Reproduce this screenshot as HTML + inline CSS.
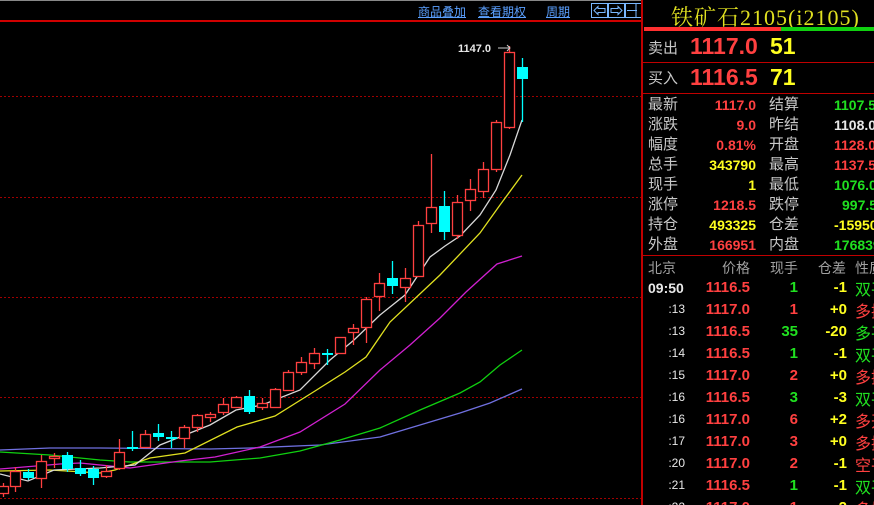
<!DOCTYPE html>
<html><head><meta charset="utf-8"><style>
html,body{margin:0;width:874px;height:505px;background:#000;overflow:hidden;position:relative;font-family:"Liberation Sans","Noto Sans CJK SC",sans-serif}
.a{position:absolute;white-space:nowrap}
.lk{color:#5aa0ff;font-size:12px;text-decoration:underline;top:3px}
.lab{color:#c8c8c8;font-size:15px}
.r{color:#ff4040}.g{color:#20e020}.y{color:#ffff20}.w{color:#e8e8e8}
.num{font-size:14px;text-align:right}
.hl{position:absolute;height:1px;background:#c00000}
</style></head><body>
<div class="a" style="left:0;top:0;width:641px;height:1px;background:#888"></div>
<div class="a lk" style="left:418px">商品叠加</div>
<div class="a lk" style="left:478px">查看期权</div>
<div class="a lk" style="left:546px">周期</div>
<svg class="a" style="left:590px;top:3px" width="52" height="15"><g fill="none" stroke="#7ab8ff"><rect x="1.5" y=".5" width="16" height="14"/><rect x="18.5" y=".5" width="16" height="14"/><rect x="35.5" y=".5" width="16" height="14"/><path d="M4 7.5l4-4v2h7v4H8v2z M32 7.5l-4-4v2h-7v4h7v2z M37 7.5h10 M46 1v13"/></g></svg>
<div class="hl" style="left:0;top:20px;width:642px;background:#d00000;height:2px"></div>
<div class="a" style="left:641px;top:0;width:2px;height:505px;background:#c00000"></div>
<svg class="a" style="left:0;top:0" width="641" height="505">
<g stroke="#a00000" stroke-dasharray="2,2" stroke-width="1"><line x1="0" y1="96.5" x2="641" y2="96.5"/><line x1="0" y1="197.5" x2="641" y2="197.5"/><line x1="0" y1="297.5" x2="641" y2="297.5"/><line x1="0" y1="397.5" x2="641" y2="397.5"/><line x1="0" y1="498.5" x2="641" y2="498.5"/></g>
<g fill="none" stroke-width="1.3">
<polyline stroke="#7070e0" points="0,450 50,448 100,448 210,449 250,448 320,445 380,437 420,425 460,413 490,403 522,389"/>
<polyline stroke="#10d010" points="0,452 50,455 100,460 130,462 210,462 260,458 300,451 340,440 380,428 420,410 460,393 480,382 500,365 522,350"/>
<polyline stroke="#d020d0" points="0,469 60,464 80,463 130,468 180,461 215,457 260,447 300,432 345,404 380,370 410,345 440,318 466,292 497,264 522,256"/>
<polyline stroke="#e0e020" points="0,471 50,470 100,473 115,470 150,458 185,453 237,427 275,416 315,391 345,372 366,357 390,322 440,275 480,233 500,205 522,175"/>
<polyline stroke="#d8d8d8" points="0,474 28,481 54,470 100,468 135,465 160,445 210,425 236,410 262,405 300,390 330,360 354,340 380,315 405,295 430,257 445,246 460,236 480,215 496,190 510,155 522,120"/>
</g>
<g id="c" stroke-width="1.3"></g>
<text x="458" y="52" fill="#e8e8e8" font-size="11" font-weight="bold" font-family="Liberation Sans">1147.0</text>
<path d="M498 48h12m-3-3l3 3-3 3" stroke="#ccc" fill="none"/>
</svg>
<script>
var d=[[3,486,493,483,497,1],[15,471,486,467,492,1],[28,472,477,469,480,0],[41,461,478,455,488,1],[54,456,458,453,468,1],[67,455,468,452,472,0],[80,468,473,460,476,0],[93,469,477,466,485,0],[106,471,476,465,478,1],[119,452,468,439,470,1],[132,447,448,431,451,0],[145,434,447,430,447,1],[158,433,436,424,441,0],[171,437,438,431,448,0],[184,427,438,425,448,1],[197,415,427,414,432,1],[210,414,417,412,422,1],[223,404,412,398,415,1],[236,397,407,396,407,1],[249,396,411,390,414,0],[262,403,407,398,410,1],[275,389,407,388,407,1],[288,372,390,370,390,1],[301,362,372,357,375,1],[314,353,363,348,369,1],[327,353,354,349,365,0],[340,337,353,337,353,1],[353,328,332,324,345,1],[366,299,327,297,343,1],[379,283,296,273,311,1],[392,278,285,261,294,0],[405,278,287,268,302,1],[418,225,276,221,276,1],[431,207,223,154,233,1],[444,206,231,191,240,0],[457,202,235,195,239,1],[470,189,200,179,211,1],[483,169,191,162,198,1],[496,122,169,120,172,1],[509,52,127,46,129,1],[522,67,78,58,122,0]];
var s='';d.forEach(function(c){var col=c[5]?'#ff4040':'#00ffff';s+='<line x1="'+(c[0]+.5)+'" x2="'+(c[0]+.5)+'" y1="'+c[3]+'" y2="'+c[1]+'" stroke="'+col+'"/><line x1="'+(c[0]+.5)+'" x2="'+(c[0]+.5)+'" y1="'+c[2]+'" y2="'+c[4]+'" stroke="'+col+'"/>';var h=Math.max(c[2]-c[1],1);s+=c[5]?'<rect x="'+(c[0]-4.5)+'" y="'+(c[1]+.5)+'" width="10" height="'+h+'" fill="#000" stroke="'+col+'"/>':'<rect x="'+(c[0]-5)+'" y="'+c[1]+'" width="11" height="'+(h+1)+'" fill="'+col+'"/>';});
document.getElementById('c').innerHTML=s;
</script>
<div class="a" style="left:671px;top:1px;color:#e0e020;font-size:22px;letter-spacing:1px;font-family:'Liberation Serif','Noto Serif CJK SC',serif">铁矿石2105(i2105)</div>
<div class="a" style="left:644px;top:27px;width:137px;height:4px;background:#ff3030"></div>
<div class="a" style="left:781px;top:27px;width:93px;height:4px;background:#10d010"></div>
<div class="hl" style="left:643px;top:62px;width:231px"></div>
<div class="hl" style="left:643px;top:93px;width:231px"></div>
<div class="hl" style="left:643px;top:255px;width:231px"></div>
<div class="a lab" style="left:648px;top:37px">卖出</div>
<div class="a lab" style="left:648px;top:67px">买入</div>
<div class="a r" style="left:690px;top:33px;font-size:23px;font-weight:bold">1117.0</div>
<div class="a r" style="left:690px;top:64px;font-size:23px;font-weight:bold">1116.5</div>
<div class="a y" style="left:770px;top:33px;font-size:23px;font-weight:bold">51</div>
<div class="a y" style="left:770px;top:64px;font-size:23px;font-weight:bold">71</div>
<div class="a" style="left:648px;top:95px;line-height:20px" >
<div class="lab">最新</div><div class="lab">涨跌</div><div class="lab">幅度</div><div class="lab">总手</div><div class="lab">现手</div><div class="lab">涨停</div><div class="lab">持仓</div><div class="lab">外盘</div></div>
<div class="a num" style="left:686px;width:70px;top:95px;line-height:20px;font-weight:bold">
<div class="r">1117.0</div><div class="r">9.0</div><div class="r">0.81%</div><div class="y">343790</div><div class="y">1</div><div class="r">1218.5</div><div class="y">493325</div><div class="r">166951</div></div>
<div class="a" style="left:769px;top:95px;line-height:20px">
<div class="lab">结算</div><div class="lab">昨结</div><div class="lab">开盘</div><div class="lab">最高</div><div class="lab">最低</div><div class="lab">跌停</div><div class="lab">仓差</div><div class="lab">内盘</div></div>
<div class="a num" style="left:820px;width:60px;top:95px;line-height:20px;font-weight:bold;text-align:left">
<div class="g" style="padding-left:14px">1107.5</div><div class="w" style="padding-left:14px">1108.0</div><div class="r" style="padding-left:14px">1128.0</div><div class="r" style="padding-left:14px">1137.5</div><div class="g" style="padding-left:14px">1076.0</div><div class="g" style="padding-left:22px">997.5</div><div class="y" style="padding-left:14px">-15950</div><div class="g" style="padding-left:14px">176839</div></div>
<div class="a" style="left:648px;top:258px;color:#a0a0a0;font-size:14px">北京</div>
<div class="a" style="left:722px;top:258px;color:#a0a0a0;font-size:14px">价格</div>
<div class="a" style="left:770px;top:258px;color:#a0a0a0;font-size:14px">现手</div>
<div class="a" style="left:818px;top:258px;color:#a0a0a0;font-size:14px">仓差</div>
<div class="a" style="left:855px;top:258px;color:#a0a0a0;font-size:14px">性质</div>
<div id="t"></div>
<script>
var rows=[["09:50","1116.5","1","g","-1","双平","g"],[":13","1117.0","1","r","+0","多换","r"],[":13","1116.5","35","g","-20","多平","g"],[":14","1116.5","1","g","-1","双平","g"],[":15","1117.0","2","r","+0","多换","r"],[":16","1116.5","3","g","-3","双平","g"],[":16","1117.0","6","r","+2","多开","r"],[":17","1117.0","3","r","+0","多换","r"],[":20","1117.0","2","r","-1","空平","r"],[":21","1116.5","1","g","-1","双平","g"],[":22","1117.0","1","r","-2","多换","r"]];
var h='';rows.forEach(function(r,i){var y=279+i*22;
h+='<div class="a w" style="'+(i?'left:660px;width:25px;text-align:right;font-size:12px;':'left:648px;font-weight:bold;font-size:14px;')+'top:'+(y+1)+'px">'+r[0]+'</div>';
h+='<div class="a r" style="left:700px;width:50px;text-align:right;top:'+y+'px;font-size:15px;font-weight:bold">'+r[1]+'</div>';
h+='<div class="a '+r[3]+'" style="left:760px;width:38px;text-align:right;top:'+y+'px;font-size:15px;font-weight:bold">'+r[2]+'</div>';
h+='<div class="a y" style="left:810px;width:37px;text-align:right;top:'+y+'px;font-size:15px;font-weight:bold">'+r[4]+'</div>';
h+='<div class="a '+r[6]+'" style="left:855px;top:'+(y-3)+'px;font-size:16px">'+r[5]+'</div>';});
document.getElementById('t').innerHTML=h;
</script>
</body></html>
